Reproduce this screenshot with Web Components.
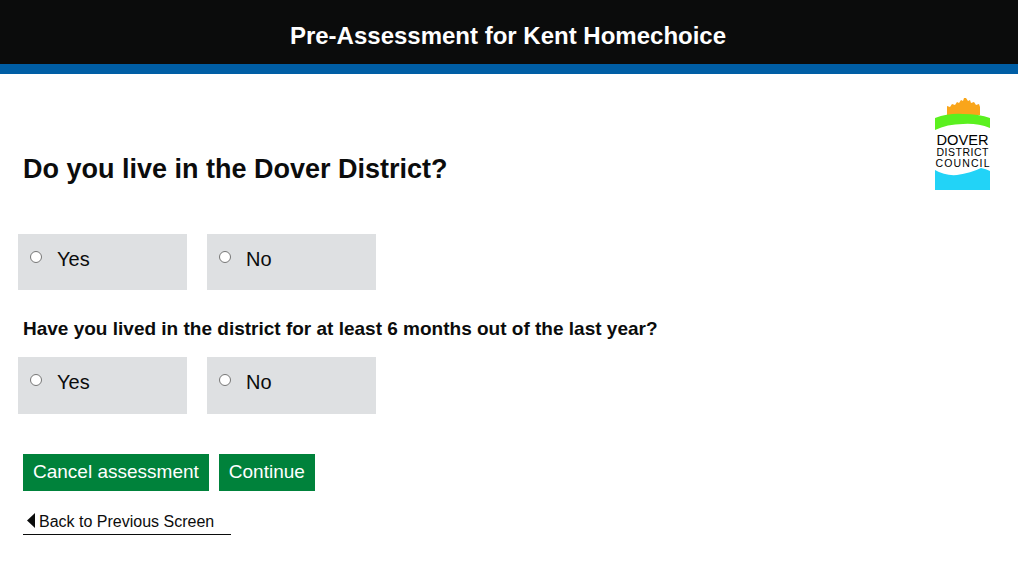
<!DOCTYPE html>
<html lang="en">
<head>
<meta charset="utf-8">
<title>Pre-Assessment for Kent Homechoice</title>
<style>
  html, body { margin: 0; background: #fff; }
  body { font-family: "Liberation Sans", Arial, sans-serif; color: #0b0c0c; }
</style>
</head>
<body>
<app-header>Pre-Assessment for Kent Homechoice</app-header>
<main-page></main-page>

<script>
class AppHeader extends HTMLElement {
  constructor() {
    super();
    const shadowRoot = this.attachShadow({mode: 'open'});
    shadowRoot.innerHTML = `
      <style>
        :host {
          display: flex;
          height: 57px;
          padding: 7px 2px 0 0;
          align-items: center;
          justify-content: center;
          background: #0b0c0c;
          border-bottom: 10px solid #005ea5;
          color: #fff;
          font-size: 24px;
          font-weight: bold;
        }
      </style>
      <slot></slot>
    `;
  }
}
customElements.define('app-header', AppHeader);

class DoverLogo extends HTMLElement {
  constructor() {
    super();
    const shadowRoot = this.attachShadow({mode: 'open'});
    shadowRoot.innerHTML = `
      <style>
        :host { display: block; width: 55px; height: 93px; }
        svg { display: block; }
        text { font-family: "Liberation Sans", Arial, sans-serif; fill: #000; text-anchor: middle; }
      </style>
      <svg width="55" height="93" viewBox="0 0 55 93">
        <path fill="#f9a51a" d="M12 18 L12 9 L15 10 L17 7 L20 8 L22 5 L24 6 L26 3 L28 4 L29 1 L31 1 L33 4 L35 3 L36 6 L39 5 L41 8 L44 7 L45 10 L45 18 Z"/>
        <path fill="#5bf01f" d="M0 21 Q14 16 28 17 Q44 17 55 21 L55 31 Q42 26 28 27 Q12 27 0 33 Z"/>
        <text x="27.5" y="48" font-size="15" textLength="52" lengthAdjust="spacingAndGlyphs">DOVER</text>
        <text x="27.5" y="59" font-size="10.5" textLength="52" lengthAdjust="spacing">DISTRICT</text>
        <text x="27.5" y="70" font-size="10.5" textLength="54" lengthAdjust="spacing">COUNCIL</text>
        <path fill="#22d3f7" d="M0 73 Q10 79 22 78 Q36 76 46 71 Q51 72 55 74 L55 93 L0 93 Z"/>
      </svg>
    `;
  }
}
customElements.define('dover-logo', DoverLogo);

class RadioBox extends HTMLElement {
  constructor() {
    super();
    const shadowRoot = this.attachShadow({mode: 'open'});
    shadowRoot.innerHTML = `
      <style>
        :host {
          display: flex;
          width: 169px;
          height: var(--box-height, 56px);
          box-sizing: border-box;
          background: #dee0e2;
          padding: 17px 0 0 12px;
          font-size: 20px;
          line-height: 17px;
          color: #0b0c0c;
          gap: 15px;
        }
        .dot {
          width: 12px;
          height: 12px;
          box-sizing: border-box;
          border-radius: 50%;
          border: 1px solid #767676;
          background: #fff;
          flex: none;
        }
      </style>
      <span class="dot"></span>
      <span class="label"><slot></slot></span>
    `;
  }
}
customElements.define('radio-box', RadioBox);

class RadioRow extends HTMLElement {
  constructor() {
    super();
    const shadowRoot = this.attachShadow({mode: 'open'});
    shadowRoot.innerHTML = `
      <style>
        :host { display: flex; gap: 20px; margin-left: 18px; }
      </style>
      <slot></slot>
    `;
  }
}
customElements.define('radio-row', RadioRow);

class GreenButton extends HTMLElement {
  constructor() {
    super();
    const shadowRoot = this.attachShadow({mode: 'open'});
    shadowRoot.innerHTML = `
      <style>
        :host {
          display: block;
          height: 37px;
          line-height: 35px;
          padding: 0 10px;
          background: #00823b;
          color: #fff;
          font-size: 19px;
          cursor: pointer;
        }
      </style>
      <slot></slot>
    `;
  }
}
customElements.define('green-button', GreenButton);

class BackLink extends HTMLElement {
  constructor() {
    super();
    const shadowRoot = this.attachShadow({mode: 'open'});
    shadowRoot.innerHTML = `
      <style>
        :host {
          display: flex;
          align-items: center;
          width: 208px;
          height: 31px;
          box-sizing: border-box;
          border-bottom: 1px solid #0b0c0c;
          padding: 6px 0 1px 4px;
          font-size: 16px;
          color: #0b0c0c;
          gap: 4px;
        }
        svg { flex: none; margin-top: -2px; }
      </style>
      <svg width="8" height="15" viewBox="0 0 8 15"><path fill="#0b0c0c" d="M8 0V15L0 7.5Z"/></svg>
      <slot></slot>
    `;
  }
}
customElements.define('back-link', BackLink);

class MainPage extends HTMLElement {
  constructor() {
    super();
    const shadowRoot = this.attachShadow({mode: 'open'});
    shadowRoot.innerHTML = `
      <style>
        :host { display: block; }
        .top {
          display: flex;
          justify-content: space-between;
          align-items: flex-start;
          padding: 23px 28px 0 23px;
          height: 160px;
          box-sizing: border-box;
        }
        h1 {
          margin: 0;
          padding-top: 56px;
          font-size: 27px;
          line-height: 32px;
          font-weight: bold;
        }
        h2 {
          margin: 0;
          padding: 27px 0 17px 23px;
          font-size: 19px;
          line-height: 23px;
          font-weight: bold;
        }
        .second { --box-height: 57px; }
        .actions {
          display: flex;
          gap: 10px;
          margin: 40px 0 0 23px;
        }
        back-link { margin: 13px 0 0 23px; }
      </style>
      <div class="top">
        <h1>Do you live in the Dover District?</h1>
        <dover-logo></dover-logo>
      </div>
      <radio-row>
        <radio-box>Yes</radio-box>
        <radio-box>No</radio-box>
      </radio-row>
      <h2>Have you lived in the district for at least 6 months out of the last year?</h2>
      <radio-row class="second">
        <radio-box>Yes</radio-box>
        <radio-box>No</radio-box>
      </radio-row>
      <div class="actions">
        <green-button>Cancel assessment</green-button>
        <green-button>Continue</green-button>
      </div>
      <back-link>Back to Previous Screen</back-link>
    `;
  }
}
customElements.define('main-page', MainPage);
</script>
</body>
</html>
